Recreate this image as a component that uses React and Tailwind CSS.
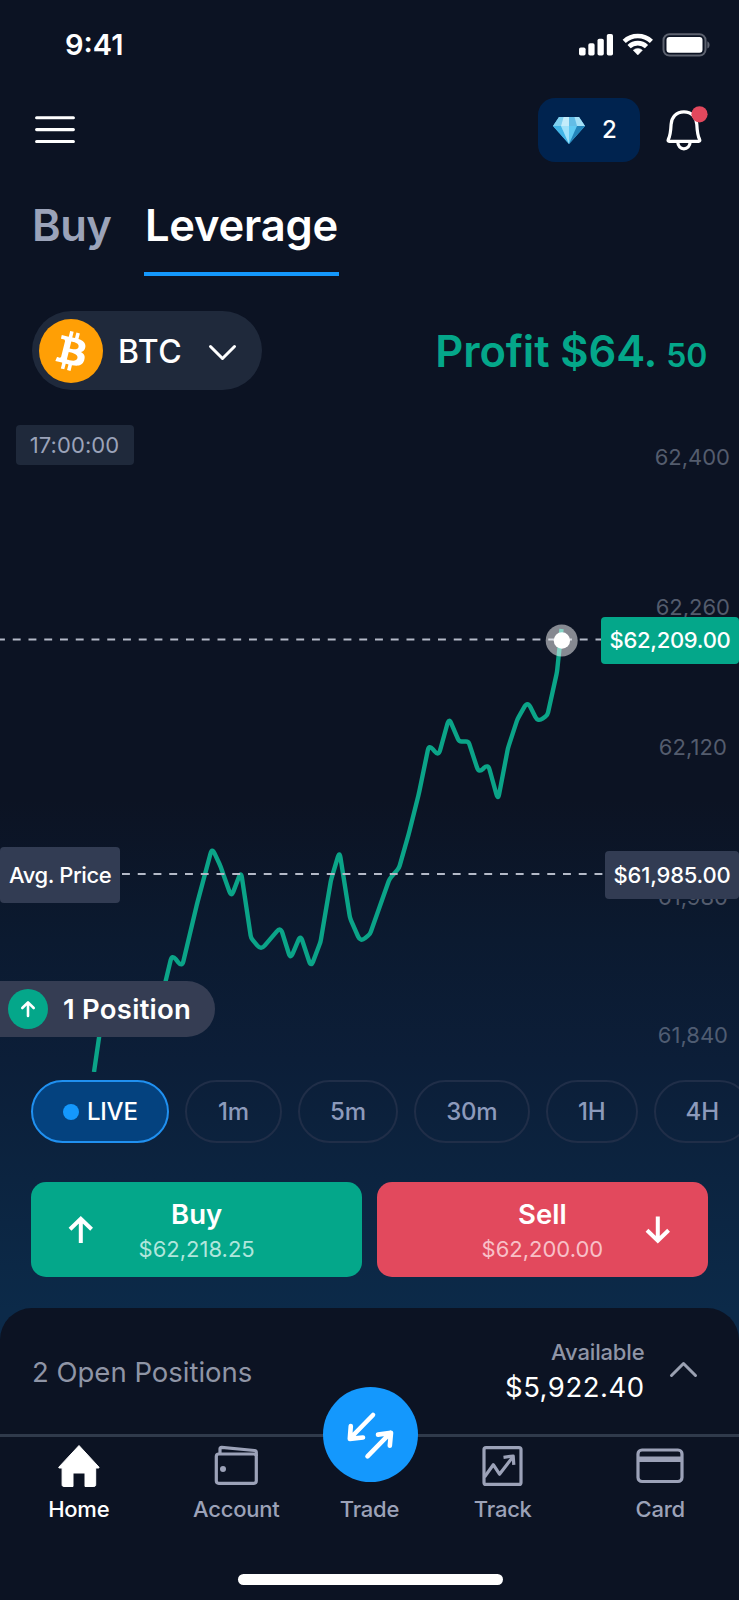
import React from "react";

const FONT = "font-['Inter','Liberation_Sans',sans-serif]";

// Turning points get a wide rounding, points along a run only a slight one.
function roundedPath(pts) {
  let d = `M${pts[0][0]} ${pts[0][1]}`;
  for (let i = 1; i < pts.length - 1; i++) {
    const [px, py] = pts[i - 1];
    const [x, y] = pts[i];
    const [nx, ny] = pts[i + 1];
    const r = (y - py) * (ny - y) < 0 ? 6 : 2.5;
    const a = Math.hypot(x - px, y - py);
    const b = Math.hypot(nx - x, ny - y);
    const ra = Math.min(r, a / 2) / a;
    const rb = Math.min(r, b / 2) / b;
    d += `L${x - (x - px) * ra} ${y - (y - py) * ra}Q${x} ${y} ${x + (nx - x) * rb} ${y + (ny - y) * rb}`;
  }
  const last = pts[pts.length - 1];
  return d + `L${last[0]} ${last[1]}`;
}

const PRICES = [
  [94, 682], [101, 634], [130, 610], [164, 598], [172, 564.5], [182, 577], [197, 514],
  [212, 458], [220, 475], [231.3, 507], [241, 481.5], [251, 548], [261, 560], [280.5, 537], [290.5, 569],
  [300.5, 545], [311, 577], [320.5, 552], [331, 490], [339.5, 461.5], [350, 528], [360.5, 552],
  [370, 544], [389.5, 489], [399, 478], [409, 443], [419, 403], [429, 354.5], [438.5, 366],
  [449, 328], [459, 351.5], [468.5, 351.5], [478.8, 383], [488, 374], [498, 410],
  [508, 358], [517.5, 329], [527.5, 311.5], [538, 332], [547.5, 325], [557, 282], [561.5, 239],
];

function StatusBar() {
  return (
    <div className="flex h-[90px] items-center justify-between pl-[65px] pr-[29px] text-[29px] font-semibold">
      <span>9:41</span>
      <svg width="134" height="26" viewBox="0 0 134 26">
        <g fill="#fff">
          <rect x="3" y="15.500" width="6.600" height="8" rx="1.800" />
          <rect x="12.300" y="11.300" width="6.300" height="12.200" rx="1.800" />
          <rect x="21.500" y="6.800" width="6.300" height="16.700" rx="1.800" />
          <rect x="30.800" y="2" width="6.200" height="21.500" rx="1.800" />
        </g>
        <g fill="none" stroke="#fff" strokeWidth="4.600">
          <path d="M48.200 9.400a20 20 0 0 1 27.200 0" />
          <path d="M53.100 14.600a12.600 12.600 0 0 1 17.400 0" />
        </g>
        <path d="M57.200 18.200a6.800 6.800 0 0 1 9.200 0L61.800 23Z" fill="#fff" stroke="#fff" strokeWidth=".5" strokeLinejoin="round" />
        <rect x="87.500" y="2.200" width="42" height="21.400" rx="6" fill="none" stroke="#5d626f" strokeWidth="2" />
        <rect x="90.500" y="5" width="36" height="15.800" rx="3" fill="#fff" />
        <path d="M131.300 9.200c3 1.400 3 6 0 7.400Z" fill="#5d626f" />
      </svg>
    </div>
  );
}

function Header() {
  return (
    <div className="mt-2 flex h-16 items-center pl-[35px] pr-[31px]">
      <svg width="40" height="28" viewBox="0 0 40 28" stroke="#fff" strokeWidth="3.100" strokeLinecap="round">
        <path d="M1.600 1.800h36.800M1.600 13.600h36.800M1.600 25.500h36.800" />
      </svg>
      <div className="ml-auto flex h-16 w-[102px] items-center rounded-[17px] bg-[#00234f] pl-[15px]">
        <svg width="32" height="27" viewBox="0 0 32 27">
          <path d="M6 0h20l6 9-16 18L0 9Z" fill="#5cc3ee" />
          <path d="M6 0h4.500L8 9H0Z" fill="#7fd0f0" />
          <path d="M10.500 0H16v9H8Z" fill="#c3ecfa" />
          <path d="M16 0h5.500L24 9h-8Z" fill="#63bde6" />
          <path d="M21.500 0H26l6 9h-8Z" fill="#a5e0f6" />
          <path d="M0 9h8l8 18Z" fill="#41b4e6" />
          <path d="M8 9h8v18Z" fill="#9fe2fa" />
          <path d="M16 9h8l-8 18Z" fill="#5fcaf3" />
          <path d="M24 9h8L16 27Z" fill="#2385bb" />
        </svg>
        <span className="ml-[17px] text-[24px] font-medium">2</span>
      </div>
      <svg className="ml-[25px]" width="43" height="48" viewBox="0 0 43 48">
        <g fill="none" stroke="#fff" strokeWidth="3.200" strokeLinejoin="round" transform="translate(-665.1 -105.6)">
          <path d="M684 111.400c-7.600 0-12.300 5.300-12.800 12.500-.4 7.600-.6 11.300-2.800 15.100-.6 1.200-.1 2 .9 2h29.400c1.100 0 1.600-.8 1-2-2.200-3.800-2.400-7.500-2.800-15.100-.5-7.200-5.200-12.500-12.900-12.500Z" />
          <path d="M677.800 141.500c.3 4.200 2.800 6.900 6.200 6.900s6-2.700 6.300-6.900" />
        </g>
        <circle cx="34.500" cy="8.300" r="8.100" fill="#e2485d" />
      </svg>
    </div>
  );
}

function Tabs() {
  return (
    <div className="flex pl-[32px] text-[43.500px] leading-[54px] tracking-[-0.200px]">
      <div className="w-[112px] pt-[36px] font-semibold tracking-[-0.500px] text-[#9ba3b9]">Buy</div>
      <div className="w-[195px] whitespace-nowrap border-b-4 border-[#1498fc] pb-[20px] pt-[36px] text-center font-semibold">Leverage</div>
    </div>
  );
}

function AssetRow() {
  return (
    <div className="mt-[35px] flex h-[79px] items-center justify-between pl-[31.500px] pr-[32px]">
      <div className="flex h-[79px] w-[230px] items-center rounded-full bg-[#1f293b] pl-[7.500px]">
        <svg width="64" height="64" viewBox="0 0 32 32">
          <circle cx="16" cy="16" r="16" fill="#ff9f05" />
          <path
            fill="#fff"
            d="M23.189 14.02c.314-2.096-1.283-3.223-3.465-3.975l.708-2.84-1.728-.43-.69 2.765c-.454-.114-.92-.22-1.385-.326l.695-2.783L15.596 6l-.708 2.839c-.376-.086-.746-.17-1.104-.26l.002-.009-2.384-.595-.46 1.846s1.283.294 1.256.312c.7.175.826.638.805 1.006l-.806 3.235c.048.012.11.03.18.057l-.183-.045-1.13 4.532c-.086.212-.303.531-.793.41.018.025-1.256-.313-1.256-.313l-.858 1.978 2.25.561c.418.105.828.215 1.231.318l-.715 2.872 1.727.43.708-2.84c.472.127.93.245 1.378.357l-.706 2.828 1.728.43.715-2.866c2.948.558 5.164.333 6.097-2.333.752-2.146-.037-3.385-1.588-4.192 1.13-.26 1.98-1.003 2.207-2.538zm-3.95 5.538c-.533 2.147-4.148.986-5.32.695l.95-3.805c1.172.293 4.929.872 4.37 3.11zm.535-5.569c-.487 1.953-3.495.96-4.47.717l.86-3.45c.975.243 4.118.696 3.61 2.733z"
          />
        </svg>
        <span className="ml-[15px] mt-[2px] text-[32px] font-medium tracking-[0.500px]">BTC</span>
        <svg className="ml-[25.500px] mt-1" width="29" height="18" viewBox="0 0 29 18" fill="none" stroke="#fff" strokeWidth="3" strokeLinecap="round" strokeLinejoin="round">
          <path d="M2.500 2.500l12 12 12-12" />
        </svg>
      </div>
      <div className="flex items-baseline pt-[2px] font-semibold text-[#04a78a]">
        <span className="text-[43.500px] leading-[54px] tracking-[-0.100px]">Profit $64.</span>
        <span className="ml-[9px] text-[32px] tracking-[-0.300px]">50</span>
      </div>
    </div>
  );
}

function Chart() {
  return (
    <div className="relative h-[682px] text-[22px]">
      <div className="absolute right-[9px] top-[52px] leading-[30px] text-[#545c6d]">62,400</div>
      <div className="absolute right-[9px] top-[202px] leading-[30px] text-[#545c6d]">62,260</div>
      <div className="absolute right-[12px] top-[342px] leading-[30px] tracking-[0.100px] text-[#545c6d]">62,120</div>
      <div className="absolute right-[11px] top-[491.500px] leading-[30px] text-[#545c6d]">61,980</div>
      <div className="absolute right-[11px] top-[630px] leading-[30px] text-[#4f5c72]">61,840</div>

      <svg className="absolute left-0 top-0" width="739" height="682" viewBox="0 0 739 682" fill="none">
        <path d={roundedPath(PRICES)} stroke="#0ba488" strokeWidth="4.400" />
        <path d="M-3 249.500H601" stroke="#b4bac8" strokeWidth="2.200" strokeDasharray="7.900 7.850" />
        <path d="M122 484H605" stroke="#b4bac8" strokeWidth="2.200" strokeDasharray="7.900 7.850" />
        <circle cx="561.700" cy="250.500" r="16" fill="#fff" fillOpacity=".5" />
        <circle cx="561.900" cy="250.500" r="8.200" fill="#fff" />
      </svg>

      <div className="absolute left-[16px] top-[35px] flex h-10 w-[118px] items-center justify-center rounded-[4px] bg-[#1f293b] pr-px tracking-[0.100px] text-[#9ba3b9]">17:00:00</div>
      <div className="absolute right-0 top-[226.500px] flex h-[47.500px] w-[138px] items-center justify-end rounded-[4px] bg-[#04a78a] pr-[8.500px] pt-px font-medium tracking-[-0.280px]">$62,209.00</div>
      <div className="absolute left-0 top-[457px] flex h-[55.500px] w-[120px] items-center rounded-[4px] bg-[#323c53] pl-[9px] pt-px font-medium tracking-[-0.400px]">Avg. Price</div>
      <div className="absolute right-0 top-[461px] flex h-[47.500px] w-[134px] items-center justify-end rounded-[4px] bg-[#323c53] pr-[8.500px] pt-px font-medium tracking-[-0.200px]">$61,985.00</div>
      <div className="absolute left-0 top-[591px] flex h-[56px] w-[215px] items-center rounded-r-full bg-[#353d53] pl-[7.500px]">
        <svg width="40" height="40" viewBox="0 0 40 40" fill="none" stroke="#fff" strokeWidth="2.600" strokeLinecap="round" strokeLinejoin="round">
          <circle cx="20" cy="20" r="20" fill="#04a78a" stroke="none" />
          <path d="M20 27V13.500M14.300 19l5.700-5.700 5.700 5.700" />
        </svg>
        <span className="ml-[15.500px] mt-[1.500px] text-[27.500px] font-semibold tracking-[0.250px]">1 Position</span>
      </div>
    </div>
  );
}

function Chip({ className, children }) {
  return <div className={`flex h-[63px] shrink-0 items-center justify-center rounded-full border-2 ${className}`}>{children}</div>;
}

function Chips() {
  const idle = "border-[#202e48] text-[#8d9abb]";
  return (
    <div className="mt-[8px] flex gap-[15.700px] overflow-hidden pl-[31.300px] text-[24px] font-medium tracking-[-0.200px]">
      <Chip className="w-[138px] border-[#2090f0] bg-[#04427f] text-white">
        <span className="mr-2 size-4 rounded-full bg-[#1498fd]" />
        LIVE
      </Chip>
      <Chip className={`w-[97px] ${idle}`}>1m</Chip>
      <Chip className={`w-[100.500px] ${idle}`}>5m</Chip>
      <Chip className={`w-[116px] ${idle}`}>30m</Chip>
      <Chip className={`w-[92.500px] ${idle}`}>1H</Chip>
      <Chip className={`w-[97px] ${idle}`}>4H</Chip>
    </div>
  );
}

function OrderButtons() {
  return (
    <div className="mt-[39px] flex h-[95px] gap-[15px] px-[31.300px] text-center">
      <div className="relative flex-1 rounded-[15px] bg-[#04a78a] pt-[15px]">
        <svg className="absolute left-[37px] top-[33px]" width="26" height="30" viewBox="0 0 26 30" fill="none" stroke="#fff" strokeWidth="4">
          <path d="M12.800 28V4M2 14.200L12.800 3.800l10.800 10.400" />
        </svg>
        <div className="text-[27.500px] font-semibold leading-[34px]">Buy</div>
        <div className="mt-[2.500px] text-[22px] leading-[30px] text-[#b0e6dc]">$62,218.25</div>
      </div>
      <div className="relative flex-1 rounded-[15px] bg-[#e2495d] pt-[15px]">
        <svg className="absolute right-[37px] top-[33px]" width="26" height="30" viewBox="0 0 26 30" fill="none" stroke="#fff" strokeWidth="4">
          <path d="M12.800 1.500V25.500M2 15.200l10.800 10.400 10.800-10.400" />
        </svg>
        <div className="text-[27.500px] font-semibold leading-[34px]">Sell</div>
        <div className="mt-[2.500px] text-[22px] leading-[30px] text-[#f8c0c8]">$62,200.00</div>
      </div>
    </div>
  );
}

function Summary() {
  return (
    <div className="mt-[31px] flex h-[126px] items-start rounded-t-[32px] bg-[#0c1323] pl-[32px] pr-[41px]">
      <div className="pt-[46.500px] text-[27.500px] leading-[34px] text-[#8f95a6]">2 Open Positions</div>
      <div className="ml-auto pt-[29px] text-right">
        <div className="text-[22px] font-medium leading-[30px] tracking-[-0.150px] text-[#8f95a6]">Available</div>
        <div className="mt-[3px] text-[27.500px] leading-[34px] tracking-[0.500px]">$5,922.40</div>
      </div>
      <svg className="ml-[24.500px] mt-[52px]" width="29" height="18" viewBox="0 0 29 18" fill="none" stroke="#9ba1b2" strokeWidth="3" strokeLinecap="round" strokeLinejoin="round">
        <path d="M2.500 15.500l12-12 12 12" />
      </svg>
    </div>
  );
}

function NavItem({ label, active, children }) {
  return (
    <div className={`flex flex-col items-center pt-1 ${active ? "text-white" : "text-[#9ca2b8]"}`}>
      <svg width="48" height="48" viewBox="0 0 48 48" fill="none" stroke="currentColor" strokeWidth="3.200" strokeLinejoin="round">
        {children}
      </svg>
      <span className="mt-[6px] text-[22px] font-medium leading-7 tracking-[-0.250px]">{label}</span>
    </div>
  );
}

function BottomNav() {
  return (
    <div className="relative bg-[#0c1323]">
      <div className="h-[3px] bg-[#303a4b]" />
      <div className="grid h-[137px] grid-cols-[1fr_1fr_109px_1fr_1fr]">
        <NavItem label="Home" active>
          <path
            d="M24 4.500L3.800 26.200c-.3.400 0 .8.500.8h2.800V43.700c0 1.200.6 1.800 1.800 1.800H18V32h12v13.500h8.900c1.200 0 1.800-.6 1.800-1.800V27h2.800c.5 0 .8-.4.500-.8Z"
            fill="currentColor"
            strokeWidth="1"
          />
        </NavItem>
        <NavItem label="Account">
          <rect x="4.300" y="13" width="40" height="29.300" rx="2.500" />
          <path d="M8 13V7.800c0-1 .7-1.600 1.700-1.500l32.800 3.200c1 .1 1.800.7 1.800 1.700V15" />
          <circle cx="11" cy="28" r="3" fill="currentColor" stroke="none" />
        </NavItem>
        <NavItem label="Trade" />
        <NavItem label="Track">
          <rect x="5" y="6.600" width="37" height="36.800" rx="2" />
          <path d="M5.500 36L14.300 23.700l6.200 9.500 13.300-17.200" />
          <path d="M24.500 16.300l9.700-1.300.6 8.800" />
        </NavItem>
        <NavItem label="Card">
          <rect x="2" y="9" width="44" height="31.500" rx="4" />
          <path d="M2 18.200h44" strokeWidth="5.500" />
        </NavItem>
      </div>
      <svg className="absolute left-[322.500px] top-[-47px]" width="95" height="95" viewBox="322.500 1387 95 95" fill="none" stroke="#fff" strokeWidth="4.600" strokeLinecap="round" strokeLinejoin="round">
        <circle cx="370" cy="1434.500" r="47.500" fill="#1498fd" stroke="none" />
        <path d="M372.500 1415L349.500 1438.500M350.300 1426L349.300 1438.900l13.200-1.400" />
        <path d="M367 1456.300L390 1432.800M377.500 1434.600l13-1.800-1.200 13" />
      </svg>
      <div className="ml-[238px] h-[11px] w-[265px] rounded-full bg-white" />
      <div className="h-[15px]" />
    </div>
  );
}

export default function App() {
  return (
    <div
      className={`h-[1600px] w-[739px] overflow-hidden bg-[#0c1323] bg-[linear-gradient(180deg,#0c1323_0px,#0c1323_800px,#0b1a30_940px,#0c1e38_1060px,#0c2440_1180px,#0c2a49_1310px)] text-white ${FONT}`}
    >
      <StatusBar />
      <Header />
      <Tabs />
      <AssetRow />
      <Chart />
      <Chips />
      <OrderButtons />
      <Summary />
      <BottomNav />
    </div>
  );
}
